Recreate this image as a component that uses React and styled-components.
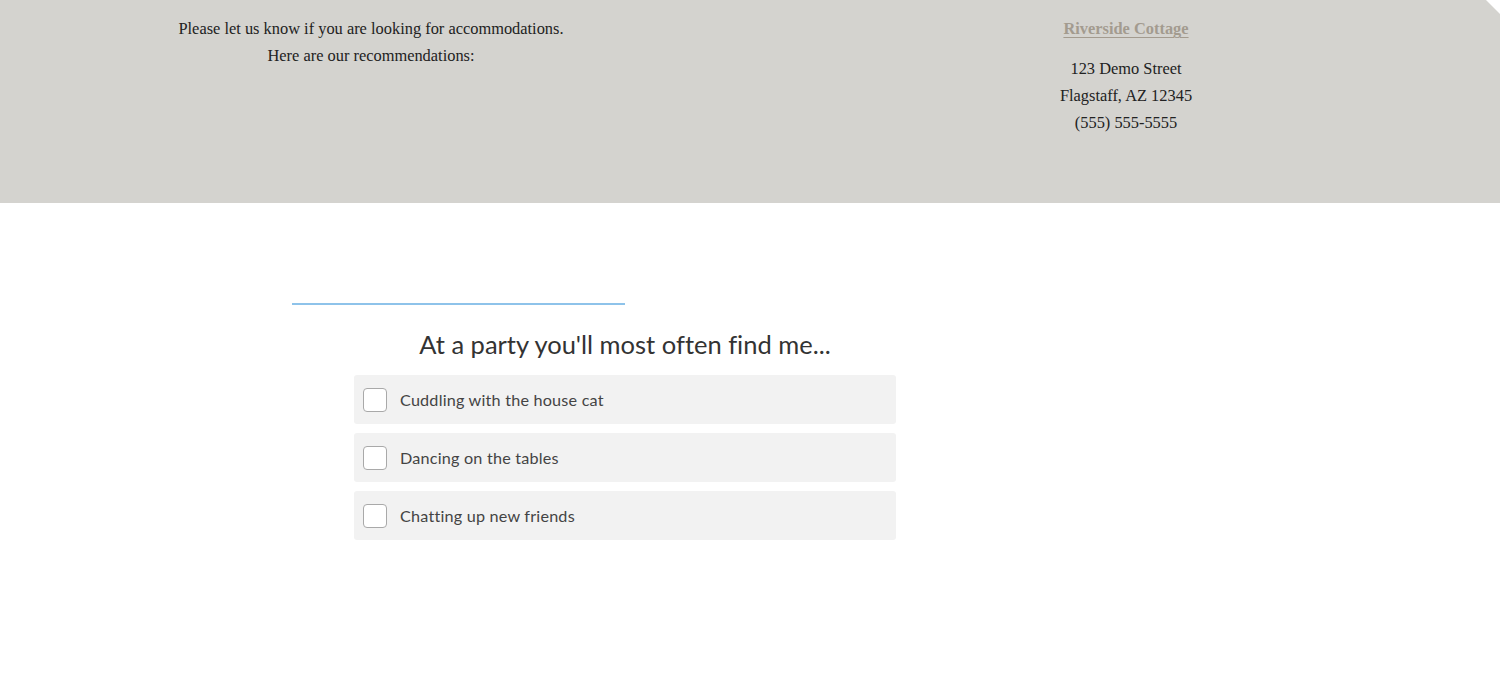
import React from 'react';
import styled, { createGlobalStyle } from 'styled-components';

const GlobalStyle = createGlobalStyle`
    body {
        margin:0;
        background:#ffffff;
    }
`

const Page = styled.div`
    width:1500px;
    min-height:688px;
    background:#ffffff;
`

const Header = styled.header`
    position:relative;
    height:203px;
    background-color:#d4d3cf;
    display:grid;
    grid-template-columns:742px 768px;
    font-family:'Liberation Serif', 'DejaVu Serif', serif;
    color:#222;
`

const Fold = styled.div`
    position:absolute;
    top:0;
    right:0;
    width:0;
    height:0;
    border-top:14px solid #ffffff;
    border-left:14px solid transparent;
`

const HeaderCol = styled.div`
    text-align:center;
    padding-top:${props => props.top}px;
    font-size:16.4px;
    line-height:27px;
`

const VenueName = styled.a`
    display:inline-block;
    font-weight:700;
    color:#a39b8f;
    text-decoration:underline;
    text-underline-offset:3px;
    margin-bottom:13px;
`

const Quiz = styled.section`
    width:666px;
    margin:100px 0 0 292px;
    display:flex;
    flex-direction:column;
    align-items:center;
`

const Progress = styled.div`
    align-self:stretch;
    height:2px;
    background:transparent;
`

const ProgressFill = styled.div`
    height:100%;
    background:#8ec3ea;
`

const Question = styled.h2`
    margin:22px 0 14px;
    font-family:'Lato', 'Open Sans', sans-serif;
    font-weight:400;
    font-size:25.5px;
    font-variant-ligatures:none;
    line-height:34px;
    color:#333;
`

const Options = styled.div`
    width:542px;
    display:flex;
    flex-direction:column;
    gap:9px;
`

const Option = styled.label`
    height:49px;
    display:flex;
    align-items:center;
    gap:13px;
    padding:0 9px;
    background:#f2f2f2;
    border-radius:3px;
    font-family:'Lato', 'Open Sans', sans-serif;
    font-size:16.2px;
    letter-spacing:0.2px;
    color:#444;
    cursor:pointer;
`

const Box = styled.span`
    width:24px;
    height:24px;
    box-sizing:border-box;
    background:#fff;
    border:1px solid #a9a9a9;
    border-radius:4px;
    flex-shrink:0;
`

const answers = [
    'Cuddling with the house cat',
    'Dancing on the tables',
    'Chatting up new friends',
];

function App() {
    return (
        <Page>
            <GlobalStyle />
            <Header>
                <HeaderCol top={15}>
                    Please let us know if you are looking for accommodations.<br />
                    Here are our recommendations:
                </HeaderCol>
                <HeaderCol top={15}>
                    <VenueName>Riverside Cottage</VenueName><br />
                    123 Demo Street<br />
                    Flagstaff, AZ 12345<br />
                    (555) 555-5555
                </HeaderCol>
                <Fold />
            </Header>
            <Quiz>
                <Progress><ProgressFill style={{ width: '50%' }} /></Progress>
                <Question>At a party you'll most often find me...</Question>
                <Options>
                    {answers.map(a => (
                        <Option key={a}><Box />{a}</Option>
                    ))}
                </Options>
            </Quiz>
        </Page>
    );
}

export default App;
